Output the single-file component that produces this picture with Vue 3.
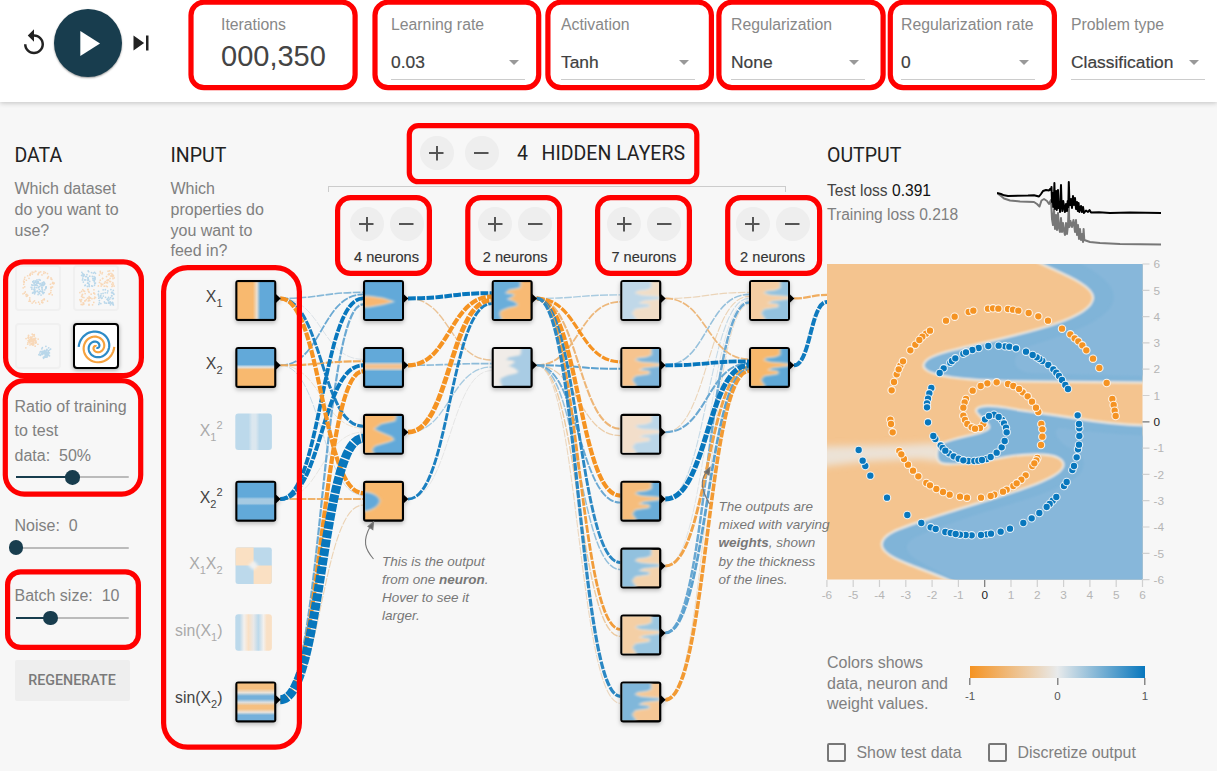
<script setup>
const selects = [
  { label: 'Learning rate', value: '0.03' },
  { label: 'Activation', value: 'Tanh' },
  { label: 'Regularization', value: 'None' },
  { label: 'Regularization rate', value: '0' },
  { label: 'Problem type', value: 'Classification' },
]

const layerSizes = [4, 2, 7, 2]

// Seeded generator keeps the dataset thumbnails stable between renders
let seed = 7
const rnd = () => {
  seed = (seed * 16807) % 2147483647
  return seed / 2147483647
}
const gauss = () => (rnd() + rnd() + rnd() + rnd() - 2) * 1.1
const circlePts = []
for (let i = 0; i < 90; i++) {
  const a = rnd() * Math.PI * 2
  const r = Math.sqrt(rnd()) * 9
  circlePts.push({ x: 23 + r * Math.cos(a), y: 22.5 + r * Math.sin(a), c: 'b' })
}
for (let i = 0; i < 80; i++) {
  const a = rnd() * Math.PI * 2
  const r = 14 + rnd() * 4.5
  circlePts.push({ x: 23 + r * Math.cos(a), y: 22.5 + r * Math.sin(a), c: 'o' })
}
const xorPts = []
for (let i = 0; i < 220; i++) {
  const sx = rnd() < 0.5 ? -1 : 1
  const sy = rnd() < 0.5 ? -1 : 1
  xorPts.push({ x: 24 + sx * (1.5 + rnd() * 17.5), y: 23 + sy * (1.5 + rnd() * 17.5), c: sx * sy > 0 ? 'b' : 'o' })
}
const gaussPts = []
for (let i = 0; i < 80; i++) {
  gaussPts.push({ x: 16.5 + gauss() * 4.5, y: 17 + gauss() * 4.5, c: 'o' })
  gaussPts.push({ x: 30.5 + gauss() * 4.5, y: 30.5 + gauss() * 4.5, c: 'b' })
}
// Blue fills quadrants one and three of the screen diagonal
const xorThumb = xorPts
const thumbs = [circlePts, xorThumb, gaussPts]
const spiral = (delta) => {
  let d = ''
  for (let i = 2; i <= 80; i++) {
    const t = 3.5 * Math.PI * (i / 80) + delta
    const r = (i / 80) * 19.5
    d += `${d ? 'L' : 'M'}${(23.5 + r * Math.sin(t)).toFixed(2)} ${(24 + r * Math.cos(t)).toFixed(2)}`
  }
  return d
}

const sliders = [
  { label: 'Noise:', value: '0', at: 0 },
  { label: 'Batch size:', value: '10', at: 30.5 },
]

// Network geometry
const colX = [235.3, 363, 491.7, 620.3, 749]
const rowY = (i) => 280 + 66.9 * i
const B = '#0877bd'
const O = '#f59322'
// [layer, source, target, width, colour]
const weights = [
  [0, 0, 1, 0.9, '#d9e0e5'], [0, 1, 2, 0.9, '#ecdcc8'], [0, 1, 3, 1, '#c9dbe7'], [0, 3, 2, 0.9, '#e6e4e0'], [0, 6, 3, 1.1, '#ecd3b4'],
  [0, 0, 0, 1.6, '#86b8d8'], [0, 1, 0, 1.8, '#6ba9d3'], [0, 6, 0, 2.2, '#6ba9d3'], [0, 1, 1, 2.1, '#f0ab5a'], [0, 3, 3, 2, '#f0b36c'],
  [0, 0, 2, 3, '#1a7fc0'], [0, 3, 0, 3.8, B], [0, 3, 1, 4, B], [0, 0, 3, 4.2, O], [0, 6, 1, 4.2, O], [0, 6, 2, 9, B],
  [1, 3, 1, 0.9, '#e3e3e3'], [1, 2, 1, 1.3, '#a8cbe1'], [1, 0, 1, 1.4, '#ebc396'], [1, 1, 1, 1.7, '#8dbbd9'],
  [1, 0, 0, 4, B], [1, 1, 0, 4.2, O], [1, 2, 0, 4.8, O], [1, 3, 0, 2.9, '#1a7fc0'],
  [2, 0, 0, 1.4, '#a9cbe0'], [2, 1, 6, 1.1, '#ecd8c0'], [2, 1, 5, 1.4, '#eccaa0'], [2, 1, 2, 1.3, '#ecceaa'],
  [2, 1, 4, 1.5, '#94c0dc'], [2, 1, 3, 1.9, '#6ba9d3'], [2, 1, 0, 1.8, '#edb87c'], [2, 1, 1, 2, '#5ba1cf'],
  [2, 0, 2, 2.1, '#eeb677'], [2, 0, 1, 3.2, O], [2, 0, 3, 4.2, O], [2, 0, 4, 2.9, '#2a87c3'], [2, 0, 5, 2.8, '#f19c3a'], [2, 0, 6, 3.2, '#2a87c3'],
  [3, 4, 0, 0.9, '#dde2e5'], [3, 6, 0, 1, '#ecdcc8'], [3, 3, 0, 1.1, '#c6dae7'], [3, 2, 0, 1.1, '#ebd4b8'], [3, 0, 0, 1.2, '#ebd4b8'],
  [3, 1, 0, 1.6, '#97c1dc'], [3, 5, 0, 2.5, '#6aa8d2'], [3, 0, 1, 1.7, '#edb87c'], [3, 2, 1, 2.1, '#6aa8d2'],
  [3, 4, 1, 2.9, '#f1a348'], [3, 1, 1, 3.8, B], [3, 3, 1, 5, B], [3, 5, 1, 2.7, '#5ba1cf'], [3, 6, 1, 3.6, '#f29a33'],
  [4, 0, 0, 2.2, '#f0ad60'], [4, 1, 0, 4, '#0f7abe'],
]
const inputs = [7, 4, 2, 7, 2]
const links = weights.map(([l, s, t, w, c]) => {
  const x0 = colX[l] + 45
  const y0 = rowY(s) + 18.4
  const x1 = l < 4 ? colX[l + 1] : 827
  const n = inputs[l]
  const y1 = rowY(t) + 18.4 + ((s - (n - 1) / 2) / n) * 14
  const m = (x0 + x1) / 2
  return { d: `M${x0} ${y0}C${m} ${y0} ${m} ${y1} ${x1} ${y1}`, w, c }
})

const jag = 'M-5-5H29V1L29 6 24 8 15 9 13 11 19 13 38 14.5 38 17 21 19 17 21 27 22 27 25 13 27 10 31 14 37V42H-5Z'
const jagWide = 'M-5-5H27V3L26 6 15 8 12 11 20 12 20 14 14 17 20 19 24 22 23 24 14 26 7 29 6 32 8 37V42H-5Z'
const zig = 'M-5-5H31V1L30 5 16 8 9 13 15 16 27 21 29 24 24 26 10 30 7 34 12 42H-5Z'
const nodes = [
  { l: 1, i: 0, bg: '#62a9d9', fg: '#f8b771', d: 'M-5 14H4L18 16 29 19.5 18 22.5 4 25H-5Z' },
  { l: 1, i: 1, bg: '#62a9d9', fg: '#f3c08b', d: 'M-5 14.5H42V20.5H-5Z' },
  { l: 1, i: 2, bg: '#62a9d9', fg: '#f8b96f', d: zig },
  { l: 1, i: 3, bg: '#f8b96f', fg: '#62a9d9', d: 'M-5 9C6 8 14 13 15 18C14 23 7 29-5 29Z' },
  { l: 2, i: 0, bg: '#f8ba74', fg: '#6aaeda', d: jagWide },
  { l: 2, i: 1, bg: '#a9cce4', fg: '#f0ece8', d: jagWide },
  { l: 3, i: 0, bg: '#f0ddc7', fg: '#c0d8e8', d: jag },
  { l: 3, i: 1, bg: '#7db4da', fg: '#f6c48f', d: jag },
  { l: 3, i: 2, bg: '#bbd6e8', fg: '#f2deca', d: jag },
  { l: 3, i: 3, bg: '#69acd8', fg: '#f6bd7b', d: jag },
  { l: 3, i: 4, bg: '#f3d2ac', fg: '#92c1de', d: jag },
  { l: 3, i: 5, bg: '#9bc6e0', fg: '#f4cfa5', d: jag },
  { l: 3, i: 6, bg: '#f5c795', fg: '#80b7da', d: jag },
  { l: 4, i: 0, bg: '#93c2de', fg: '#f4cda2', d: jag },
  { l: 4, i: 1, bg: '#5fa8d6', fg: '#f7b86c', d: jag },
]
const features = [
  { on: true, fill: 'url(#gx1)', parts: ['X', '1'] },
  { on: true, fill: 'url(#gx2)', parts: ['X', '2'] },
  { on: false, fill: 'url(#gx1s)', parts: ['X', '1', '2'] },
  { on: true, fill: 'url(#gx2s)', parts: ['X', '2', '2'] },
  { on: false, fill: 'none', parts: ['X', '1', '', 'X', '2'] },
  { on: false, fill: 'url(#gs1)', parts: ['sin(X', '1', '', ')'] },
  { on: true, fill: 'url(#gs2)', parts: ['sin(X', '2', '', ')'] },
]
const frames = [
  ...features.map((f, i) => ({ l: 0, i, on: f.on })).filter((f) => f.on),
  ...nodes,
]

// Sample points, in thirds of a pixel from the two corners of the plot area
const at = (oy) => ([x, y]) => ({ x: 820 + x / 3, y: oy + y / 3 })
const orangePts = [
  ...[[378,542],[404,530],[446,516],[460,512],[504,506],[519,505],[535,506],[564,507],[579,509],[595,512],[626,519],[655,529],[684,542],[726,566],[751,583],[764,595],[775,604],[787,616],[799,631],[819,656],[838,684],[860,729],[877,777],[881,795],[884,812],[887,828],[318,581],[330,572],[307,590],[286,614],[298,600],[271,631],[241,677],[249,664],[230,703],[236,688],[222,726],[215,751],[211,839],[213,852],[218,877],[530,727],[502,730],[482,738],[458,752],[438,777],[434,787],[430,803],[430,827],[435,840],[442,852],[455,862],[490,852],[480,864],[465,866],[564,732],[580,738],[608,757],[597,747],[623,769],[636,785],[655,816],[648,803],[664,852],[667,868],[667,890]].map(at(140)),
  ...[[663,135],[652,174],[649,181],[637,198],[643,190],[617,226],[604,239],[580,258],[590,250],[560,269],[549,275],[523,284],[512,288],[483,293],[441,293],[420,290],[389,284],[369,276],[349,267],[319,249],[330,256],[295,229],[279,212],[264,194],[252,177],[238,153],[244,163]].map(at(400)),
]
const bluePts = [
  ...[[505,618],[555,619],[536,617],[568,620],[588,625],[618,635],[667,663],[658,657],[650,652],[638,645],[685,675],[700,688],[709,698],[717,708],[726,720],[736,735],[744,747],[476,624],[457,630],[430,641],[438,637],[391,668],[396,663],[406,655],[371,685],[359,699],[334,744],[328,760],[324,776],[321,790],[321,802],[324,847],[773,826],[495,838],[522,824],[507,828],[546,840],[536,831],[552,850],[558,863],[560,877]].map(at(140)),
  ...[[346,117],[340,108],[362,136],[368,144],[387,160],[376,152],[401,169],[416,176],[445,183],[430,181],[463,183],[475,182],[500,177],[512,171],[486,180],[530,158],[545,142],[554,123],[778,85],[777,72],[778,108],[774,148],[777,134],[770,172],[757,210],[762,198],[732,258],[740,246],[698,302],[709,291],[689,312],[680,321],[658,339],[635,355],[610,369],[570,386],[542,395],[500,403],[513,401],[483,405],[455,406],[437,405],[420,404],[376,396],[392,399],[407,402],[332,382],[347,387],[304,369],[262,345],[201,293],[151,227],[136,198],[128,182],[116,150]].map(at(400)),
]
const ticks = Array.from({ length: 13 }, (_, i) => i - 6)

const blueTop = 'M1030 258C1050 270 1094 283 1093 298C1092 322 1000 338 953 350C936 354 923 359 923.5 366C925 376 962 380 1006 381.3L1150 382.7V258Z'
const blueLow = 'M1150 425.6C1115 424.5 1095 421.5 1076 418.3C1050 414 1028 412 1006 407.5C992 405 978 405 976 410C975 415 991 423 989 428C985 434 958 436 943 443C936 447 935 458 940 462.5C948 467 985 461 1006 457C1030 453 1063 452 1063.5 465C1063 481 990 498 930 518.3C900 528 881 534 881.7 545C883 560 925 568 962 586H1150Z'

const testLoss = 'M997 192L1001 193 1004 194.3 1008 195 1028 194.5 1034 194.2 1039 195.5 1041 193 1043 190 1046 189 1049 189.5 1050 188 1051 189 1051.5 186 1052 201 1052.6 192 1053.2 206 1054 196 1054.4 182 1055 208 1055.7 200 1056.2 190 1056.8 209 1057.6 200 1058 189 1058.6 207 1059.5 203 1060 211 1061 184 1061.6 204 1062.4 210 1063.2 200 1064 205 1065 211 1066 203 1067 210 1067.7 200 1068.3 206 1068.8 181 1069.4 199 1070.2 204 1071 198 1072 207 1073 195 1074 204 1075 197 1076 208 1077 201 1077.8 210 1078.6 202 1079.4 211 1081 205 1082 211 1083 206 1084 212 1086 209.5 1088 211 1089.5 209 1091 211.5 1099 211.2 1110 212 1130 211.5 1161 212'
const trainLoss = 'M997 192L1001 195 1004 197.5 1010 199.5 1020 200.5 1034 201 1037 203 1039.5 205.5 1041.5 199.5 1044 198 1047 200 1049 203 1051 199 1052 218 1053 224 1054 208 1055 228 1056 214 1057 229 1058 212 1059 227 1060 231 1061 217 1062 231 1063 222 1064 230 1065 234 1066 222 1067 233 1068 224 1068.8 203 1069.4 226 1070.5 220 1072 226 1073.5 219 1075 231 1076 219 1077 234 1078 224 1079 238 1080 228 1081 239 1082 233 1083 241 1083.6 228 1084.3 239 1090 241 1100 242 1120 243 1161 243.5'

// Highlight frames: [x, y, right, bottom, radius] measured on the outer edge
const marks = [
  [188.4, -0.4, 357.7, 90.3, 15], [372.4, -0.4, 541.3, 90.3, 15], [545.3, -0.4, 714, 90.3, 15], [716.3, -0.4, 885.7, 90.3, 15], [887.7, -0.4, 1057, 90.3, 15],
  [406.7, 123, 699.4, 184.3, 11], [335, 195, 432, 276, 15], [465.2, 195, 562.2, 276, 15], [595, 195, 692, 276, 15], [725.1, 195, 822.2, 276, 15],
  [3, 259.3, 144, 378.3, 20], [2.7, 378, 143.3, 496.7, 21], [5, 569.3, 141, 650, 15], [161, 265, 302, 749.7, 26],
]
</script>

<template>
  <div class="page">
    <header class="top">
      <div class="playback">
        <svg class="ic-replay" viewBox="0 0 24 24"><path d="M12 5V1L7 6l5 5V7c3.31 0 6 2.69 6 6s-2.69 6-6 6-6-2.69-6-6H4c0 4.42 3.58 8 8 8s8-3.58 8-8-3.58-8-8-8z" /></svg>
        <div class="play"><svg viewBox="0 0 24 24"><path d="M8 5v14l11-7z" /></svg></div>
        <svg class="ic-step" viewBox="0 0 24 24"><path d="M6 18l8.5-6L6 6v12zM16 6v12h2V6h-2z" /></svg>
      </div>
      <div class="field">
        <span class="label">Iterations</span>
        <span class="count">000,350</span>
      </div>
      <div v-for="s in selects" :key="s.label" class="field">
        <span class="label">{{ s.label }}</span>
        <div class="select"><span>{{ s.value }}</span><i class="caret"></i></div>
      </div>
    </header>

    <main class="main">
      <aside class="data">
        <h4>DATA</h4>
        <p class="desc">Which dataset do you want to use?</p>
        <div class="thumbs">
          <svg v-for="(pts, k) in thumbs" :key="k" class="thumb dim" viewBox="0 0 46 46">
            <circle v-for="(p, j) in pts" :key="j" :cx="p.x" :cy="p.y" r="0.95" :class="p.c" />
          </svg>
          <svg class="thumb picked" viewBox="0 0 46 46">
            <path :d="spiral(0)" class="sb" />
            <path :d="spiral(Math.PI)" class="so" />
          </svg>
        </div>
        <div class="ratio">Ratio of training to test<br />data:&nbsp; 50%</div>
        <div class="slider"><div class="fill" :style="{ width: '50%' }"></div><div class="knob" :style="{ left: '50%' }"></div></div>
        <template v-for="s in sliders" :key="s.label">
          <div class="slabel">{{ s.label }}&nbsp; {{ s.value }}</div>
          <div class="slider"><div class="fill" :style="{ width: s.at + '%' }"></div><div class="knob" :style="{ left: s.at + '%' }"></div></div>
        </template>
        <div class="regen">REGENERATE</div>
      </aside>

      <section class="network">
        <div class="input-col">
          <h4>INPUT</h4>
          <p class="desc">Which properties do you want to feed in?</p>
        </div>
        <div class="hidden-col">
          <div class="layers-head">
            <span class="rb plus"></span><span class="rb"></span>
            <span class="num">4</span><h4>HIDDEN LAYERS</h4>
          </div>
          <div class="bracket"></div>
          <div class="groups">
            <div v-for="(n, k) in layerSizes" :key="k" class="group">
              <div class="btns"><span class="rb plus"></span><span class="rb"></span></div>
              <span class="neurons">{{ n }} neurons</span>
            </div>
          </div>
        </div>

        <svg class="diagram" viewBox="160 102 667 669">
          <defs>
            <linearGradient id="gx1"><stop offset=".42" stop-color="#f8b96f" /><stop offset=".53" stop-color="#eadfd2" /><stop offset=".62" stop-color="#62a9d9" /></linearGradient>
            <linearGradient id="gx2" x2="0" y2="1"><stop offset=".42" stop-color="#62a9d9" /><stop offset=".49" stop-color="#dfe3e5" /><stop offset=".56" stop-color="#f8b96f" /></linearGradient>
            <linearGradient id="gx1s"><stop offset=".36" stop-color="#bcd9eb" /><stop offset=".46" stop-color="#dbe7ef" /><stop offset=".56" stop-color="#dbe7ef" /><stop offset=".66" stop-color="#bcd9eb" /></linearGradient>
            <linearGradient id="gx2s" x2="0" y2="1"><stop offset=".38" stop-color="#62a9d9" /><stop offset=".44" stop-color="#a6cae2" /><stop offset=".56" stop-color="#a6cae2" /><stop offset=".62" stop-color="#62a9d9" /></linearGradient>
            <linearGradient id="gs1"><stop offset=".12" stop-color="#bcd9eb" /><stop offset=".24" stop-color="#f3f0ed" /><stop offset=".36" stop-color="#f9e0c5" /><stop offset=".5" stop-color="#e8e8e8" /><stop offset=".63" stop-color="#bcd9eb" /><stop offset=".77" stop-color="#f3f0ed" /><stop offset=".86" stop-color="#f9e0c5" /></linearGradient>
            <linearGradient id="gs2" x2="0" y2="1"><stop offset=".14" stop-color="#f5bf80" /><stop offset=".25" stop-color="#eae3da" /><stop offset=".34" stop-color="#74b0da" /><stop offset=".42" stop-color="#74b0da" /><stop offset=".51" stop-color="#dcdfe0" /><stop offset=".6" stop-color="#f5bf80" /><stop offset=".69" stop-color="#f5bf80" /><stop offset=".78" stop-color="#eae3da" /><stop offset=".86" stop-color="#74b0da" /></linearGradient>
            <filter id="soft" x="-20%" y="-20%" width="140%" height="140%"><feGaussianBlur stdDeviation="1.7 1" /></filter>
          </defs>

          <g class="links">
            <path v-for="(k, j) in links" :key="j" :d="k.d" :stroke="k.c" :stroke-width="k.w" />
          </g>

          <g v-for="(f, i) in features" :key="'f' + i">
            <text class="flabel" :class="{ off: !f.on }" x="222.5" :y="rowY(i) + 21.8">{{ f.parts[0] }}<tspan class="sm" dy="5">{{ f.parts[1] }}</tspan><tspan v-if="f.parts[2]" class="sm" dy="-12">{{ f.parts[2] }}</tspan><tspan v-if="f.parts[3]" dy="-5">{{ f.parts[3] }}</tspan><tspan v-if="f.parts[4]" class="sm" dy="5">{{ f.parts[4] }}</tspan></text>
            <rect v-if="!f.on && f.fill !== 'none'" :x="colX[0]" :y="rowY(i) - 0.3" width="36.6" height="36.6" rx="3" :fill="f.fill" />
            <svg v-if="f.fill === 'none'" :x="colX[0]" :y="rowY(i) - 0.3" width="36.6" height="36.6" class="quad">
              <rect width="36.6" height="36.6" rx="3" fill="#bcd9eb" />
              <path d="M3 0H18.3V36.6H33.6Q36.6 36.6 36.6 33.6V18.3H0V3Q0 0 3 0Z" fill="#fae0c3" />
              <path d="M18.3 13L23 18.3 18.3 23 13 18.3Z" fill="#f1f1f0" filter="url(#soft)" />
            </svg>
          </g>

          <g class="frames">
            <g v-for="f in frames" :key="f.l + '-' + f.i">
              <rect :x="colX[f.l]" :y="rowY(f.i)" width="41" height="41" rx="3" />
              <path :d="`M${colX[f.l] + 40} ${rowY(f.i) + 13.4}l5.4 5-5.4 5z`" />
            </g>
          </g>
          <template v-for="(f, i) in features" :key="'a' + i">
            <rect v-if="f.on" :x="colX[0] + 2.1" :y="rowY(i) + 2.1" width="36.8" height="36.8" :fill="f.fill" />
          </template>
          <svg v-for="n in nodes" :key="'n' + n.l + n.i" :x="colX[n.l] + 2.1" :y="rowY(n.i) + 2.1" width="36.8" height="36.8">
            <rect width="37" height="37" :fill="n.bg" />
            <path :d="n.d" :fill="n.fg" stroke="#ece8e2" stroke-width="0.9" filter="url(#soft)" />
          </svg>

          <g class="callout">
            <path d="M373.5 559C365 549 362 541 370.5 526" />
            <path class="head" d="M373.5 522L368 526.5 372.8 529.5Z" />
            <text x="382" y="565.6">This is the output</text>
            <text x="382" y="584">from one <tspan class="b">neuron</tspan>.</text>
            <text x="382" y="602.2">Hover to see it</text>
            <text x="382" y="620.4">larger.</text>
            <path d="M709.5 504C701 489 700 480 706.5 472" />
            <path class="head" d="M710 467.5L704.5 472 709 475Z" />
            <text x="718.5" y="511">The outputs are</text>
            <text x="718.5" y="529.2">mixed with varying</text>
            <text x="718.5" y="547.4"><tspan class="b">weights</tspan>, shown</text>
            <text x="718.5" y="565.7">by the thickness</text>
            <text x="718.5" y="584">of the lines.</text>
          </g>
        </svg>
      </section>

      <section class="output">
        <h4>OUTPUT</h4>
        <div class="loss-row">
          <div class="losses">
            <div class="test">Test loss <b>0.391</b></div>
            <div class="train">Training loss 0.218</div>
          </div>
          <svg class="chart" viewBox="997 178 165 68">
            <path :d="trainLoss" stroke="#777" />
            <path :d="testLoss" stroke="#000" />
          </svg>
        </div>

        <svg class="plot" viewBox="827 264 345 340">
          <defs>
            <clipPath id="area"><rect x="827" y="264" width="315.5" height="315.5" /></clipPath>
            <filter id="edge" filterUnits="userSpaceOnUse" x="800" y="240" width="370" height="360"><feGaussianBlur stdDeviation="1" /></filter>
            <filter id="haze" filterUnits="userSpaceOnUse" x="780" y="400" width="250" height="120"><feGaussianBlur stdDeviation="4 3.5" /></filter>
          </defs>
          <g clip-path="url(#area)">
            <rect x="827" y="264" width="316" height="316" fill="#f4c48f" />
            <path d="M800 447L900 445 940 443 944 462 920 459 870 461 800 469Z" fill="#ece2d6" filter="url(#haze)" />
            <path :d="blueTop" fill="#80b4d8" stroke="#ece8e0" stroke-width="2.2" filter="url(#edge)" />
            <path :d="blueLow" fill="#80b4d8" stroke="#ece8e0" stroke-width="2.2" filter="url(#edge)" />
            <g filter="url(#edge)">
              <path d="M1072 258C1100 274 1114 284 1114 297C1114 318 1075 332 1030 346C1010 354 1010 370 1030 373L1150 376V258Z" fill="#87b7da" />
              <path d="M1150 436C1110 434 1080 431 1060 428C1050 430 1060 445 1072 449C1086 455 1086 466 1080 474C1060 494 990 508 950 524C920 534 906 540 907 548C908 560 940 570 965 586H1150Z" fill="#87b7da" />
            </g>
          </g>
          <g class="dots">
            <circle v-for="(p, j) in orangePts" :key="'o' + j" :cx="p.x" :cy="p.y" r="3.7" fill="#f59322" />
            <circle v-for="(p, j) in bluePts" :key="'b' + j" :cx="p.x" :cy="p.y" r="3.7" fill="#0877bd" />
          </g>
          <g class="axis">
            <g v-for="t in ticks" :key="t" :class="{ zero: t === 0 }">
              <path :d="`M${984.7 + t * 26.3} 580v7M1142.5 ${421.8 - t * 26.3}h7`" />
              <text :x="984.7 + t * 26.3" y="599" text-anchor="middle">{{ t }}</text>
              <text x="1153.5" :y="426 - t * 26.3">{{ t }}</text>
            </g>
          </g>
        </svg>

        <div class="legend">
          <p class="desc">Colors shows data, neuron and weight values.</p>
          <div class="scale">
            <div class="ramp"></div>
            <div class="marks"><span>-1</span><span>0</span><span>1</span></div>
          </div>
        </div>
        <div class="checks">
          <label><i></i>Show test data</label>
          <label><i></i>Discretize output</label>
        </div>
      </section>
    </main>

    <svg class="highlights" viewBox="0 0 1217 771">
      <rect v-for="(m, j) in marks" :key="j" :x="m[0] + 2.6" :y="m[1] + 2.6" :width="m[2] - m[0] - 5.2" :height="m[3] - m[1] - 5.2" :rx="m[4] - 2" />
    </svg>
  </div>
</template>

<style>
html,
body {
  margin: 0;
  overflow: hidden;
}
</style>

<style scoped>
.page {
  position: relative;
  width: 1217px;
  height: 771px;
  overflow: hidden;
  background: #f7f7f7;
  font-family: "Liberation Sans", Arial, sans-serif;
  font-size: 16px;
  color: #777;
  display: flex;
  flex-direction: column;
}
.top {
  flex: none;
  height: 102px;
  box-sizing: border-box;
  background: #fff;
  box-shadow: 0 1px 5px rgba(0, 0, 0, 0.22);
  display: flex;
  gap: 36px;
  position: relative;
  z-index: 1;
}
.playback {
  width: 166px;
  padding-left: 19px;
  height: 86px;
  display: flex;
  align-items: center;
  flex: none;
}
.ic-replay,
.ic-step {
  width: 30px;
  height: 30px;
  fill: #222;
  flex: none;
}
.ic-replay {
  margin-right: 5px;
}
.ic-step {
  margin-left: 4px;
}
.play {
  width: 68px;
  height: 68px;
  border-radius: 50%;
  background: #183d4e;
  box-shadow: 0 1px 2px rgba(0, 0, 0, 0.4);
  display: flex;
  align-items: center;
  justify-content: center;
  flex: none;
}
.play svg {
  width: 43px;
  height: 43px;
  fill: #fff;
  margin-right: 2px;
}
.field {
  width: 134px;
  flex: none;
  padding-top: 14.5px;
  display: flex;
  flex-direction: column;
}
.label {
  font-size: 15.8px;
  line-height: 20px;
  color: #888;
  white-space: nowrap;
}
.count {
  font-size: 29px;
  line-height: 34px;
  margin-top: 4.5px;
  color: #444;
}
.select {
  margin-top: 11.5px;
  height: 33px;
  border-bottom: 1.5px solid #ccc;
  display: flex;
  align-items: center;
  justify-content: space-between;
  font-size: 17.4px;
  color: #404040;
  -webkit-text-stroke: 0.2px #404040;
}
.caret {
  border: 5px solid transparent;
  border-top-color: #999;
  border-bottom: 0;
  margin-right: 6px;
}
.main {
  flex: 1;
  display: flex;
  align-items: flex-start;
}
h4 {
  margin: 0;
  font-family: Roboto, "Liberation Sans", sans-serif;
  font-weight: 400;
  font-size: 19.5px;
  line-height: 24px;
  color: #222;
  white-space: nowrap;
}
.desc {
  margin: 11px 0 0;
  font-size: 16px;
  line-height: 20.6px;
  color: #808080;
}
.data {
  width: 116px;
  padding: 42.4px 26px 0 14.5px;
}
.thumbs {
  margin-top: 24px;
  display: grid;
  grid-template-columns: 46px 46px;
  gap: 12px;
}
.thumb {
  width: 46px;
  height: 46px;
  box-sizing: border-box;
  border-radius: 4px;
}
.dim {
  border: 2px solid #f0f0f0;
}
.dim .b {
  fill: #b9d7ea;
}
.dim .o {
  fill: #f8d8b8;
}
.picked {
  border: 2.5px solid #000;
  background: #fff;
  box-shadow: 0 1px 4px rgba(0, 0, 0, 0.35);
}
.picked path {
  fill: none;
  stroke-width: 2.4;
}
.sb {
  stroke: #2d8bc7;
}
.so {
  stroke: #f6a23f;
}
.ratio {
  margin-top: 25.5px;
  line-height: 24.5px;
  font-size: 16px;
  color: #808080;
}
.slider {
  position: relative;
  height: 16px;
  margin: 1.2px 2px 0 1.5px;
  background: linear-gradient(#bbb, #bbb) center / 100% 2px no-repeat;
}
.fill {
  position: absolute;
  left: 0;
  top: 7px;
  height: 2px;
  background: #183d4e;
}
.knob {
  position: absolute;
  top: 0.7px;
  width: 14.6px;
  height: 14.6px;
  margin-left: -7.3px;
  border-radius: 50%;
  background: #183d4e;
}
.slabel {
  margin-top: 28.4px;
  line-height: 24px;
  font-size: 16px;
  color: #808080;
  white-space: nowrap;
}
.slider + .slabel {
  padding-bottom: 0.8px;
}
.regen {
  margin-top: 33.5px;
  width: 115px;
  height: 41px;
  line-height: 41px;
  text-align: center;
  background: #eee;
  border-radius: 2px;
  font-family: Roboto, "Liberation Sans", sans-serif;
  font-weight: 500;
  font-size: 14.3px;
  color: #7a7a7a;
}
.network {
  position: relative;
  z-index: 1;
  width: 667px;
  height: 669px;
  margin-left: 3.5px;
  flex: none;
  display: flex;
}
.diagram {
  position: absolute;
  left: 0;
  top: 0;
  width: 667px;
  height: 669px;
  overflow: visible;
}
.input-col {
  width: 100px;
  padding: 42.4px 67.5px 0 10.5px;
  flex: none;
}
.hidden-col {
  width: 483px;
  flex: none;
  margin-left: -10.5px;
}
.layers-head {
  display: flex;
  align-items: center;
  height: 34px;
  margin: 34.4px 0 0 92px;
}
.layers-head .rb + .rb {
  margin-left: 11px;
}
.layers-head h4,
.num {
  padding-top: 1px;
}
.num {
  margin-left: 18.5px;
  font-family: Roboto, "Liberation Sans", sans-serif;
  font-size: 19.5px;
  line-height: 24px;
  color: #222;
  width: 24.5px;
}
.rb {
  position: relative;
  width: 34px;
  height: 34px;
  border-radius: 50%;
  background:
    linear-gradient(#555, #555) center / 14.5px 2px no-repeat,
    #eeeeee;
  flex: none;
}
.rb.plus {
  background:
    linear-gradient(#555, #555) center / 14.5px 2px no-repeat,
    linear-gradient(#555, #555) center / 2px 14.5px no-repeat,
    #eeeeee;
}
.bracket {
  width: 456px;
  height: 5px;
  margin: 15.6px 0 0 0.5px;
  border: 1.5px solid #ccc;
  border-bottom: 0;
}
.groups {
  display: flex;
  margin: 15px 0 0 22px;
}
.group {
  width: 128.7px;
  flex: none;
}
.btns {
  display: flex;
  gap: 6px;
}
.neurons {
  display: block;
  width: 74px;
  text-align: center;
  font-size: 14.6px;
  line-height: 18px;
  margin-top: 7.5px;
  color: #333;
  -webkit-text-stroke: 0.15px #333;
}
.links path {
  fill: none;
  stroke-dasharray: 7.8 1.3;
}
.frames {
  filter: drop-shadow(0 2px 2px rgba(0, 0, 0, 0.25));
}
.flabel {
  font-size: 15.8px;
  fill: #444;
  text-anchor: end;
}
.flabel.off {
  fill: #aaa;
}
.sm {
  font-size: 11px;
}
.callout path {
  fill: none;
  stroke: #777;
  stroke-width: 1.1;
}
.callout .head {
  fill: #666;
}
.callout text {
  font-size: 13.5px;
  font-style: italic;
  fill: #777;
}
.callout .b {
  font-weight: 700;
}
.output {
  width: 345px;
  padding-top: 42.4px;
  flex: none;
}
.loss-row {
  display: flex;
  height: 68px;
  margin-top: 10.4px;
}
.losses {
  width: 170px;
  font-size: 15.6px;
  line-height: 24.4px;
  white-space: nowrap;
  color: #808080;
}
.test {
  color: #444;
}
.test b {
  font-weight: 400;
  color: #111;
}
.chart {
  width: 165px;
  height: 68px;
}
.chart path {
  fill: none;
  stroke-width: 2;
  stroke-linejoin: round;
}
.plot {
  display: block;
  width: 345px;
  height: 340px;
  margin-top: 17.2px;
  overflow: visible;
}
.dots circle {
  stroke: #fff;
  stroke-opacity: 0.85;
  stroke-width: 1.1;
}
.axis path {
  stroke: #d0d0d0;
  stroke-width: 1.2;
}
.axis text {
  font-size: 11.8px;
  fill: #b5b5b5;
}
.axis .zero path {
  stroke: #777;
}
.axis .zero text {
  fill: #222;
}
.legend {
  display: flex;
  margin-top: 49.3px;
  align-items: flex-start;
}
.legend .desc {
  margin: 0;
  width: 130px;
  font-size: 16px;
}
.scale {
  margin: 12.7px 0 0 13px;
  width: 175px;
}
.ramp {
  height: 12px;
  background: linear-gradient(90deg, #f59322, #e8eaeb 50%, #0877bd);
}
.marks {
  display: flex;
  justify-content: space-between;
  margin: 0 -10px;
}
.marks span {
  width: 20px;
  text-align: center;
  font-size: 11.5px;
  line-height: 14px;
  color: #555;
  padding-top: 11px;
  background: linear-gradient(#888, #888) top center / 1.5px 7px no-repeat;
}
.checks {
  display: flex;
  margin-top: 27.5px;
}
.checks label {
  display: flex;
  align-items: center;
  height: 20px;
  font-size: 15.9px;
  color: #808080;
  width: 161px;
  flex: none;
  white-space: nowrap;
}
.checks i {
  width: 15px;
  height: 15px;
  border: 2px solid #777;
  border-radius: 2px;
  margin-right: 10.5px;
}
.highlights {
  position: absolute;
  inset: 0;
  width: 1217px;
  height: 771px;
  z-index: 3;
}
.highlights rect {
  fill: none;
  stroke: #f00;
  stroke-width: 5.2;
}
</style>
